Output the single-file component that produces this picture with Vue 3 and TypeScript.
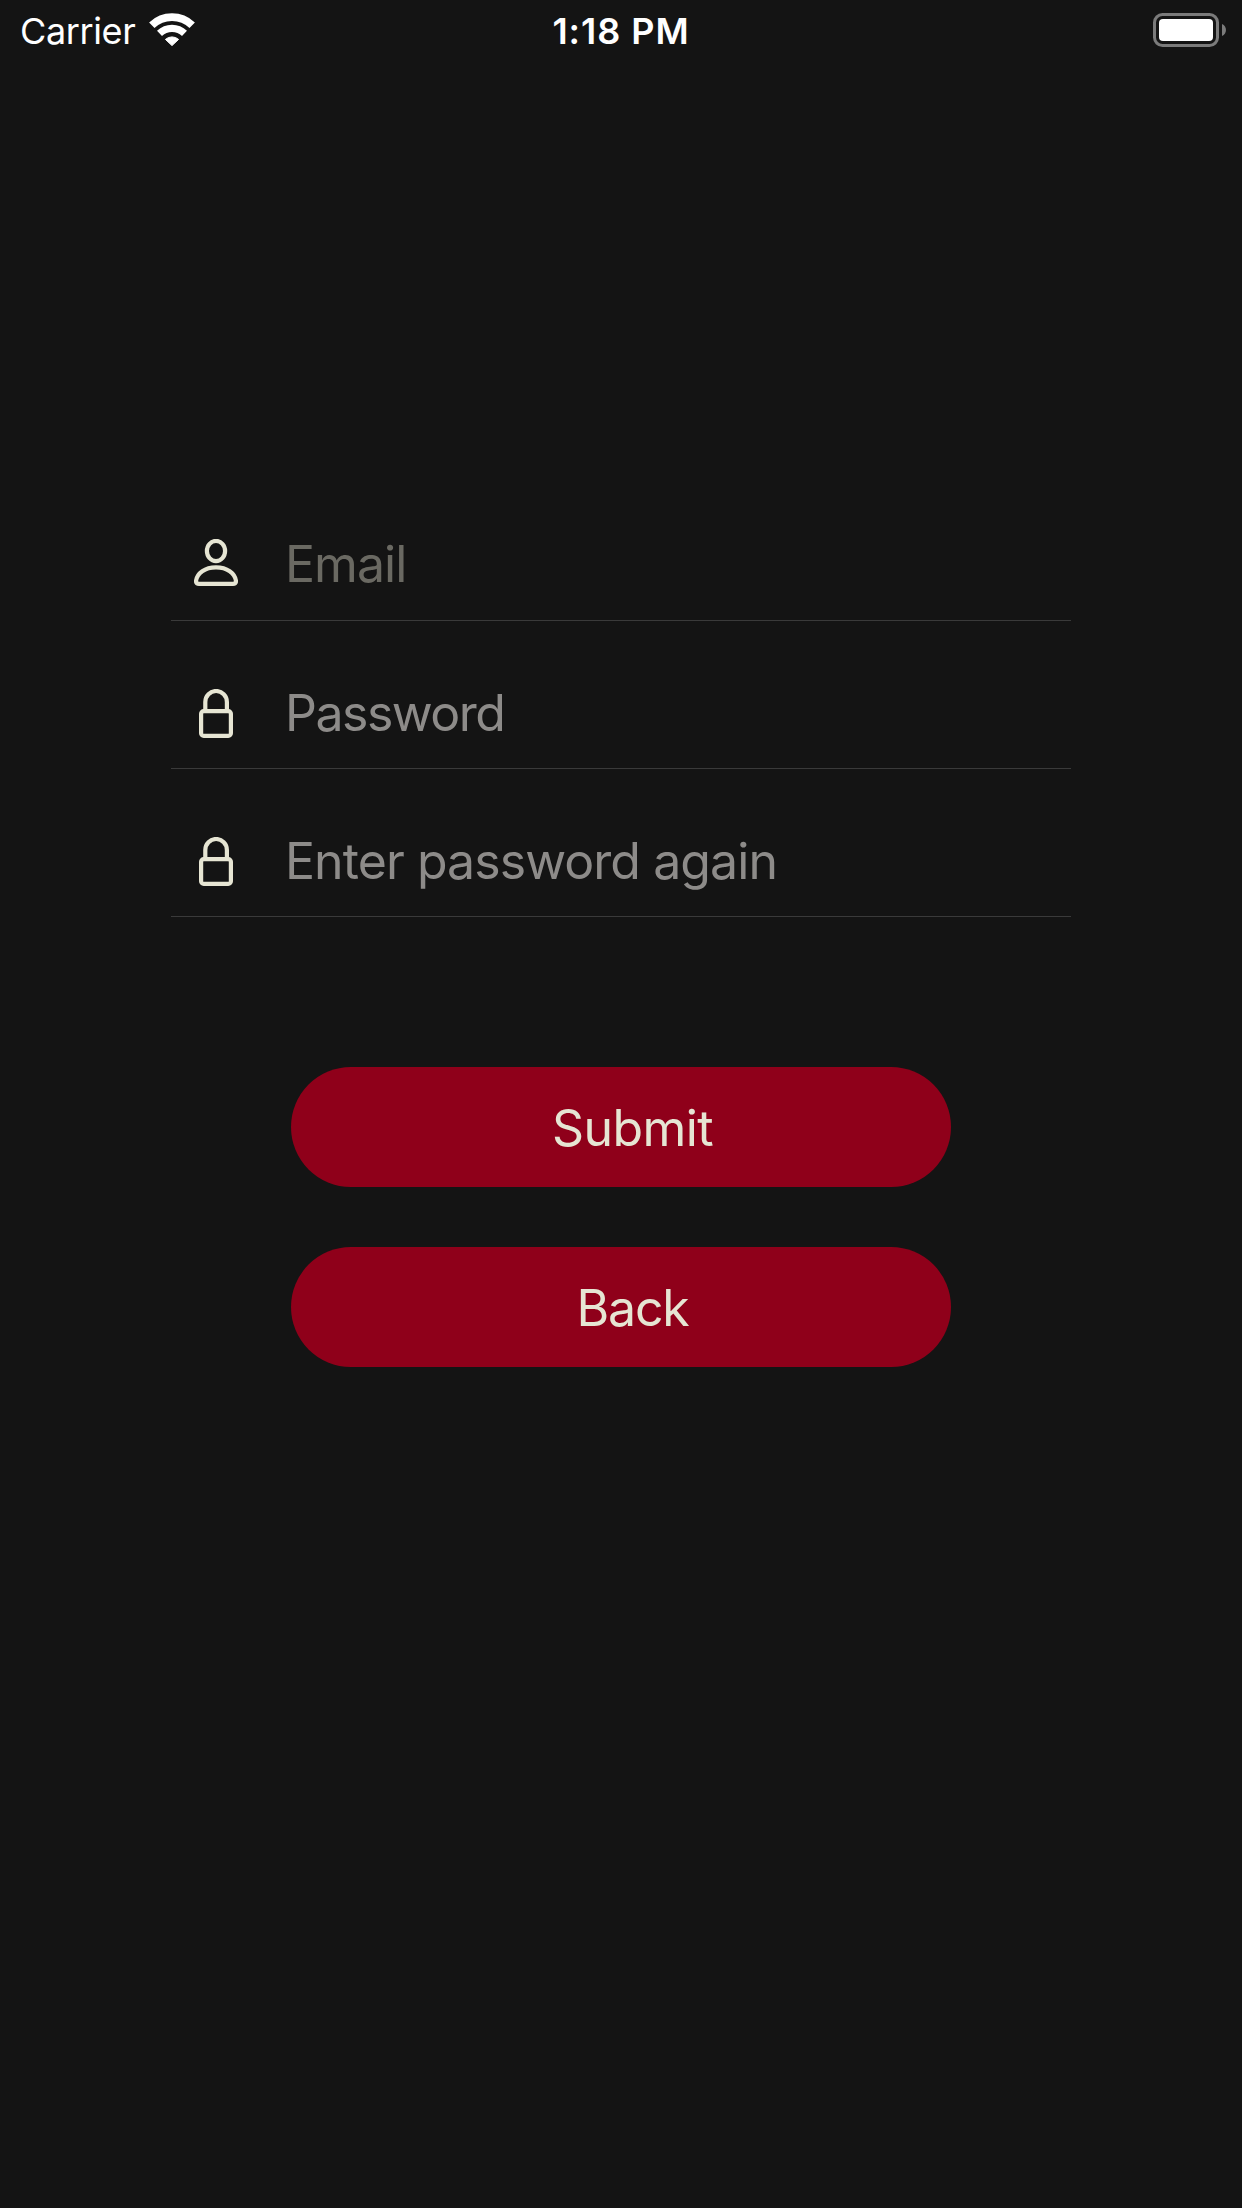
<script setup lang="ts">
interface Field {
  id: string
  icon: 'person' | 'lock'
  type: 'email' | 'password'
  placeholder: string
}

const fields: Field[] = [
  { id: 'email', icon: 'person', type: 'email', placeholder: 'Email' },
  { id: 'password', icon: 'lock', type: 'password', placeholder: 'Password' },
  { id: 'confirm', icon: 'lock', type: 'password', placeholder: 'Enter password again' },
]

const actions = [
  { id: 'submit', label: 'Submit' },
  { id: 'back', label: 'Back' },
]
</script>

<template>
  <div class="screen">
    <header class="status">
      <div class="status-left">
        <span class="carrier">Carrier</span>
        <svg class="wifi" width="48" height="36" viewBox="0 0 48 36" fill="none">
          <path d="M3.8 13.3A29.2 29.2 0 0 1 44.2 13.3" stroke="#fff" stroke-width="7.8" />
          <path d="M11.5 21.3A18.1 18.1 0 0 1 36.5 21.3" stroke="#fff" stroke-width="7.2" />
          <path d="M17.4 27.4A10 10 0 0 1 30.6 27.4L24 33.6Z" fill="#fff" stroke="#fff" stroke-width="1" stroke-linejoin="round" />
        </svg>
      </div>
      <span class="time">1:18 PM</span>
      <div class="status-right">
        <svg width="74" height="34" viewBox="0 0 74 34">
          <rect x="1.5" y="1.5" width="63" height="31" rx="8" fill="none" stroke="#7b7b7b" stroke-width="3" />
          <rect x="6" y="6" width="54" height="22" rx="4" fill="#fff" />
          <path d="M69 11C74.3 13 74.3 21 69 23Z" fill="#7b7b7b" />
        </svg>
      </div>
    </header>

    <main class="content">
      <form class="form" @submit.prevent>
        <label v-for="f in fields" :key="f.id" class="field" :class="`field-${f.id}`">
          <span class="icon">
            <svg v-if="f.icon === 'person'" width="44" height="47" viewBox="0 0 44 47">
              <ellipse cx="22" cy="12" rx="9.1" ry="10.1" />
              <path d="M5 44.9H39Q42 44.9 42 42C41 34 33 28.3 22 28.3C11 28.3 3 34 2 42Q2 44.9 5 44.9Z" />
            </svg>
            <svg v-else width="34" height="49" viewBox="0 0 34 49">
              <path d="M6.3 22V13A10.8 11 0 0 1 27.9 13V22" />
              <rect x="2.1" y="22.1" width="29.8" height="24.8" rx="2.6" />
            </svg>
          </span>
          <input class="input" :type="f.type" :placeholder="f.placeholder" />
        </label>
      </form>

      <div class="actions">
        <button v-for="a in actions" :key="a.id" type="button" class="button" :class="`button-${a.id}`">
          {{ a.label }}
        </button>
      </div>
    </main>
  </div>
</template>

<style>
body {
  background: #141414;
}
</style>

<style scoped>
.screen {
  box-sizing: border-box;
  width: 1242px;
  height: 2208px;
  background: #141414;
  font-family: Inter, 'Liberation Sans', sans-serif;
  overflow: hidden;
}

.status {
  display: grid;
  grid-template-columns: 1fr auto 1fr;
  align-items: center;
  height: 60px;
  padding: 0 15px;
  color: #fff;
  font-size: 36px;
  line-height: 44px;
}

.status-left {
  display: flex;
  align-items: center;
  padding-left: 5px;
}

.carrier {
  width: 128px;
  padding-top: 2px;
  letter-spacing: -0.38px;
}

.time {
  padding-top: 2px;
  font-weight: 600;
  letter-spacing: 0.95px;
}

.status-right {
  display: flex;
  justify-content: flex-end;
}

.content {
  display: flex;
  flex-direction: column;
  align-items: center;
  padding-top: 413px;
}

.form {
  width: 900px;
}

.field {
  box-sizing: border-box;
  display: flex;
  align-items: flex-end;
  height: 148px;
  border-bottom: 1px solid #3a3a3a;
}

.icon {
  display: flex;
  justify-content: center;
  width: 90px;
  margin-right: 24px;
  padding-bottom: 30px;
}

.icon svg {
  display: block;
  fill: none;
  stroke: #e6e5d3;
  stroke-width: 4.2;
}

.field-email .icon {
  padding-bottom: 34px;
}

.input {
  flex: 1;
  min-width: 0;
  height: 60px;
  margin: 0 0 25px;
  padding: 0;
  border: 0;
  outline: 0;
  background: transparent;
  color: #e6e5d3;
  font: 400 50px/60px Inter, 'Liberation Sans', sans-serif;
}

.input::placeholder {
  color: #8d8b89;
  opacity: 1;
}

.field-email .input {
  margin-bottom: 26px;
  letter-spacing: -0.95px;
}

.field-email .input::placeholder {
  color: #6a6962;
}

.field-password .input {
  letter-spacing: -1.5px;
}

.field-confirm .input {
  letter-spacing: -0.93px;
}

.actions {
  display: flex;
  flex-direction: column;
  gap: 60px;
  width: 660px;
  margin-top: 150px;
}

.button {
  height: 120px;
  padding: 2px 0 0 23px;
  border: 0;
  border-radius: 60px;
  background: #8f001a;
  color: #e6e5d3;
  font: 400 50px/60px Inter, 'Liberation Sans', sans-serif;
  letter-spacing: -0.6px;
}

.button-back {
  letter-spacing: -1.2px;
}
</style>
